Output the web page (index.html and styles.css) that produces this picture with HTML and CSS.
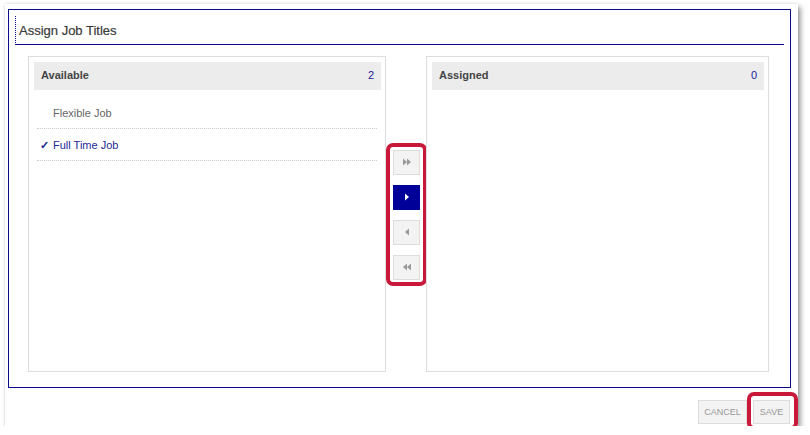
FILE: index.html
```html
<!DOCTYPE html>
<html>
  <head>
    <title>Assign Job Titles</title>
    <link rel="stylesheet" href="styles.css">
  </head>
  <body>
    <div class="dialog">
      <div class="frame">
        <h2 class="title">Assign Job Titles</h2>

        <div class="lists">
          <div class="panel">
            <div class="panel-head">
              <span>Available</span>
              <span class="count">2</span>
            </div>
            <ul class="items">
              <li class="item">Flexible Job</li>
              <li class="item selected"><span class="check">&#10003;</span>Full Time Job</li>
            </ul>
          </div>

          <div class="moves">
            <div class="moves-box">
              <button class="move" title="Assign all">
                <svg width="10" height="8" viewBox="0 0 10 8"><path d="M1 0.5 L5 4 L1 7.5 Z M5 0.5 L9 4 L5 7.5 Z" fill="#9a9a9a"/></svg>
              </button>
              <button class="move active" title="Assign">
                <svg width="6" height="8" viewBox="0 0 6 8"><path d="M1 0.5 L5 4 L1 7.5 Z" fill="#fff"/></svg>
              </button>
              <button class="move" title="Remove">
                <svg width="6" height="8" viewBox="0 0 6 8"><path d="M5 0.5 L1 4 L5 7.5 Z" fill="#9a9a9a"/></svg>
              </button>
              <button class="move" title="Remove all">
                <svg width="10" height="8" viewBox="0 0 10 8"><path d="M5 0.5 L1 4 L5 7.5 Z M9 0.5 L5 4 L9 7.5 Z" fill="#9a9a9a"/></svg>
              </button>
            </div>
          </div>

          <div class="panel">
            <div class="panel-head">
              <span>Assigned</span>
              <span class="count">0</span>
            </div>
            <ul class="items"></ul>
          </div>
        </div>
      </div>

      <div class="footer">
        <button class="btn">CANCEL</button>
        <div class="save-box">
          <button class="btn save">SAVE</button>
        </div>
      </div>
    </div>
  </body>
</html>
```

FILE: styles.css
```css
body {
  margin: 0;
  background: #fff;
  font-family: "Liberation Sans", Arial, sans-serif;
}

.dialog {
  margin: 4px 0 0 5px;
  padding-top: 5px;
  width: 793px;
  height: 417px;
  background: #fff;
  box-shadow: 0 0 3px rgba(0, 0, 0, 0.15), 3px 3px 5px rgba(0, 0, 0, 0.35);
}

.frame {
  margin: 0 0 0 3px;
  width: 781px;
  height: 377px;
  border: 1px solid #0a0a8c;
}

.title {
  margin: 6px 6px 0 6px;
  height: 28px;
  padding-left: 3px;
  border-left: 1px dotted #0a0a8c;
  border-bottom: 1px solid #0a0a8c;
  font-size: 13px;
  font-weight: normal;
  line-height: 30px;
  color: #3a3a3a;
  -webkit-text-stroke: 0.2px #3a3a3a;
}

.lists {
  display: grid;
  grid-template-columns: 358px 40px 343px;
  margin: 11px 0 0 19px;
  height: 316px;
}

.panel {
  border: 1px solid #ddd;
  padding: 5px 4px 0 5px;
}

.panel-head {
  display: flex;
  justify-content: space-between;
  height: 28px;
  padding: 0 7px 0 7px;
  background: #ececec;
  font-size: 11px;
  font-weight: bold;
  line-height: 27px;
  color: #444;
}

.count {
  font-weight: normal;
  color: #1a1a9a;
}

.items {
  list-style: none;
  margin: 7px 0 0 3px;
  padding: 0;
  width: 340px;
}

.item {
  height: 31px;
  padding-left: 16px;
  border-bottom: 1px dotted #ccc;
  font-size: 11px;
  line-height: 32px;
  color: #666;
}

.item.selected {
  padding-left: 3px;
  color: #1c2a96;
}

.check {
  display: inline-block;
  width: 13px;
  font-size: 11px;
  font-weight: bold;
}

.moves {
  display: flex;
  align-items: center;
}

.moves-box {
  display: flex;
  flex-direction: column;
  gap: 10px;
  width: 27px;
  padding: 3px 3px 2px 3px;
  border: 4px solid #c8193a;
  border-radius: 7px;
}

.move {
  display: flex;
  align-items: center;
  justify-content: center;
  width: 27px;
  height: 25px;
  padding: 0;
  background: #f3f3f3;
  border: 1px solid #ddd;
}

.move.active {
  background: #000099;
  border-color: #000099;
}

.footer {
  display: flex;
  justify-content: flex-end;
  align-items: flex-start;
  margin-top: 4px;
}

.btn {
  height: 24px;
  padding: 0;
  background: #f3f3f3;
  border: 1px solid #ddd;
  font-family: "Liberation Sans", Arial, sans-serif;
  font-size: 9px;
  color: #999;
}

.footer > .btn {
  width: 49px;
  margin-top: 8px;
}

.save-box {
  padding: 4px 4px 2px 2px;
  border: 4px solid #c8193a;
  border-radius: 7px;
}

.save {
  width: 37px;
}
```
